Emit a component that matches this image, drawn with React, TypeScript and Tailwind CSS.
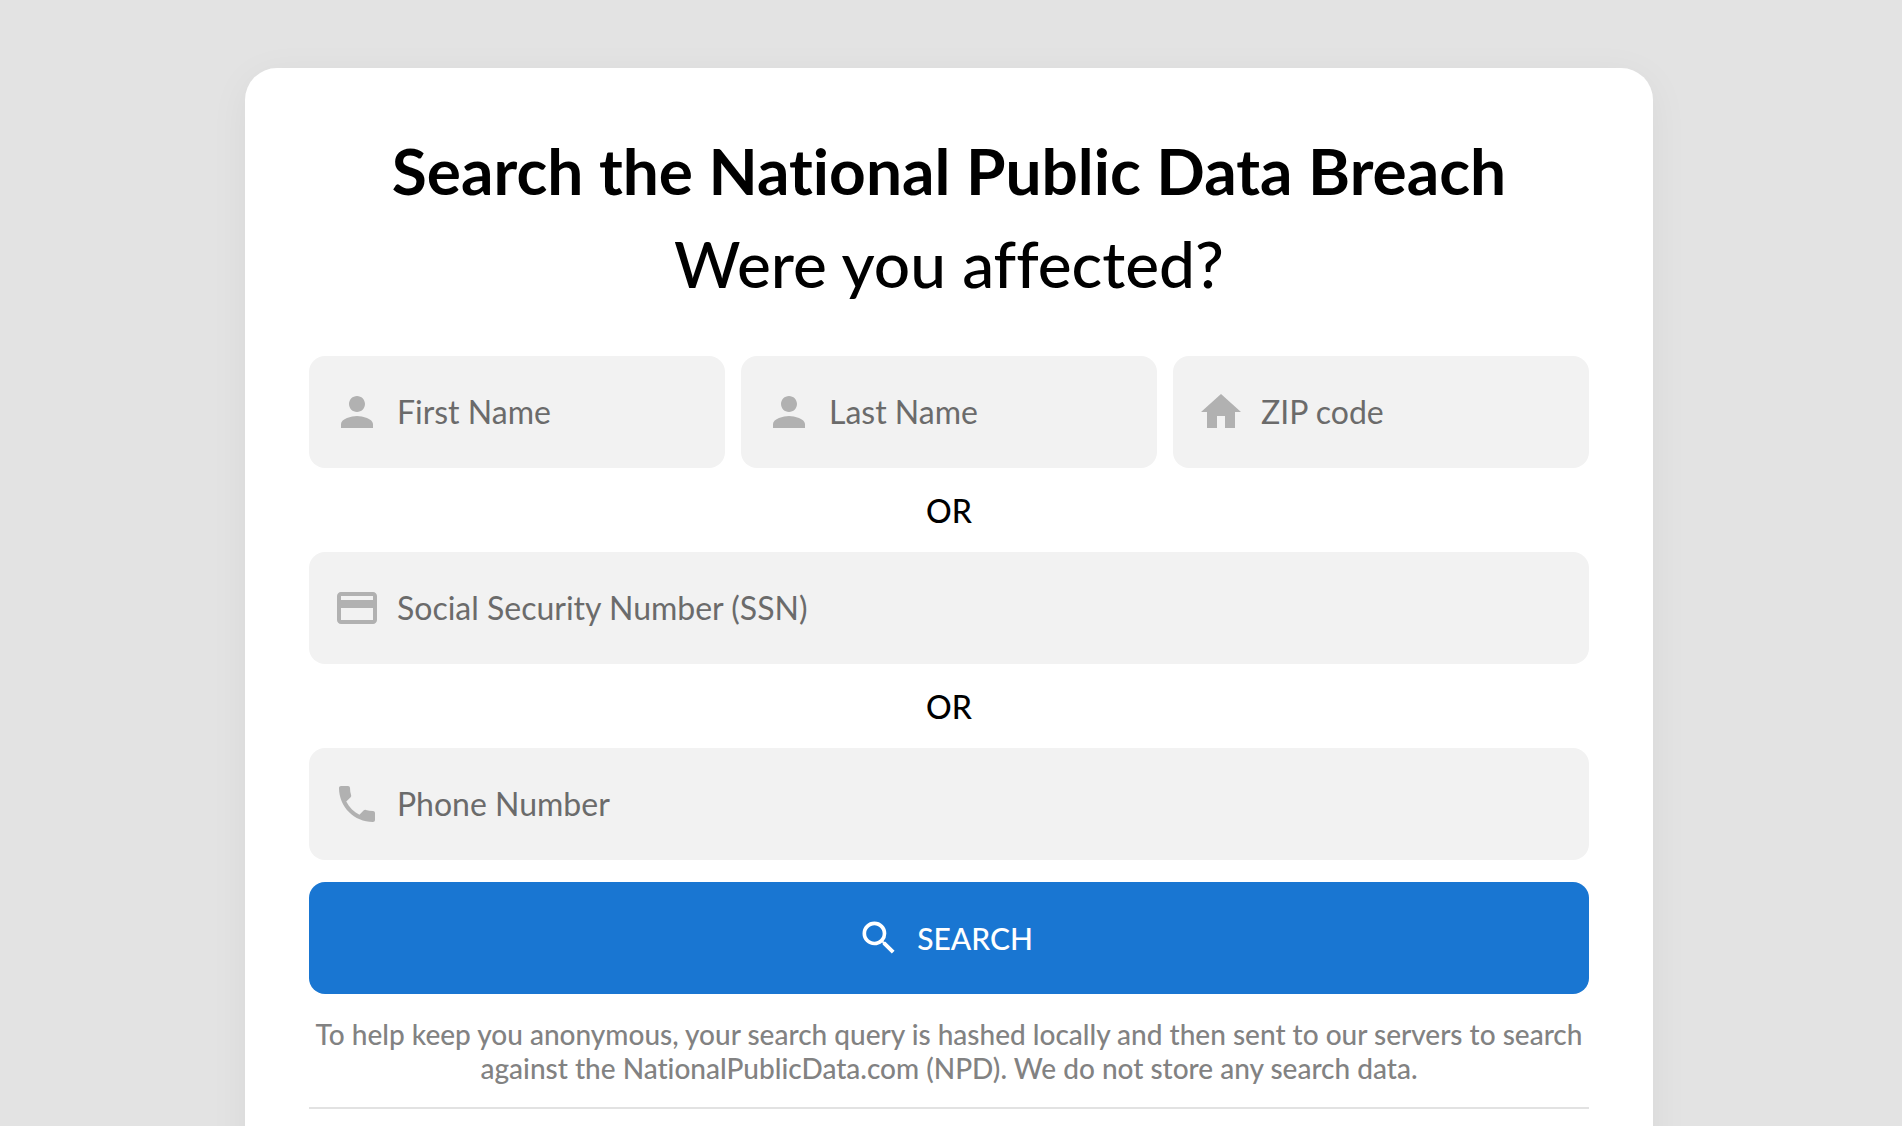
import React, { useState } from 'react';
import { IconType } from 'react-icons';
import { MdCreditCard, MdHome, MdPerson, MdPhone, MdSearch } from 'react-icons/md';

interface FieldProps {
  id: string;
  label: string;
  icon: IconType;
  value: string;
  type?: string;
  onChange: (id: string, value: string) => void;
}

const Field: React.FC<FieldProps> = ({ id, label, icon: Icon, value, type = 'text', onChange }) => (
  <div className="flex h-28 min-w-0 items-center gap-4 rounded-2xl bg-[#f2f2f2] px-6">
    <label htmlFor={id} aria-label={label} className="shrink-0 text-[#b1b1b1]">
      <Icon className="size-12" />
    </label>
    <input
      id={id}
      type={type}
      placeholder={label}
      value={value}
      onChange={e => onChange(id, e.target.value)}
      className="h-full w-full min-w-0 bg-transparent pb-0.5 text-[32px] text-black outline-none placeholder:text-[#6b6b6b]"
    />
  </div>
);

const OrDivider = () => (
  <p className="pt-[23px] pb-[21px] text-center text-[32px] leading-10 font-medium">OR</p>
);

const App: React.FC = () => {
  const [query, setQuery] = useState({ firstName: '', lastName: '', zip: '', ssn: '', phone: '' });

  const updateField = (id: string, value: string) => {
    setQuery(prev => ({ ...prev, [id]: value }));
  };

  return (
    <div className="min-h-screen bg-[#e3e3e3] pt-[68px] pr-1 font-['Lato',sans-serif] text-black [font-variant-ligatures:none]">
      <main className="mx-auto min-h-[calc(100vh-68px)] max-w-[1408px] rounded-t-[32px] bg-white p-16 pt-14 shadow-[0_8px_40px_rgba(0,0,0,0.05)]">
        <h1 className="text-center text-[64px] leading-[93px] font-bold">
          Search the National Public Data Breach
          <span className="block font-medium">Were you affected?</span>
        </h1>

        <form className="mt-[46px]" onSubmit={e => e.preventDefault()}>
          <div className="grid grid-cols-3 gap-4">
            <Field id="firstName" label="First Name" icon={MdPerson} value={query.firstName} onChange={updateField} />
            <Field id="lastName" label="Last Name" icon={MdPerson} value={query.lastName} onChange={updateField} />
            <Field id="zip" label="ZIP code" icon={MdHome} value={query.zip} onChange={updateField} />
          </div>
          <OrDivider />
          <Field id="ssn" label="Social Security Number (SSN)" icon={MdCreditCard} value={query.ssn} onChange={updateField} />
          <OrDivider />
          <Field id="phone" label="Phone Number" type="tel" icon={MdPhone} value={query.phone} onChange={updateField} />

          <button
            type="submit"
            className="mt-[22px] flex h-28 w-full items-center justify-center gap-4 rounded-2xl bg-[#1976d2] pr-2 text-[30px] font-medium text-white hover:bg-[#1565c0]"
          >
            <MdSearch className="size-11" />
            SEARCH
          </button>
        </form>

        <p className="mt-[23px] border-b-2 border-[#e2e2e2] pb-[22px] text-center text-[28px] leading-[34px] font-medium text-[#828282]">
          To help keep you anonymous, your search query is hashed locally and then sent to our servers to search
          against the NationalPublicData.com (NPD). We do not store any search data.
        </p>
      </main>
    </div>
  );
};

export default App;
